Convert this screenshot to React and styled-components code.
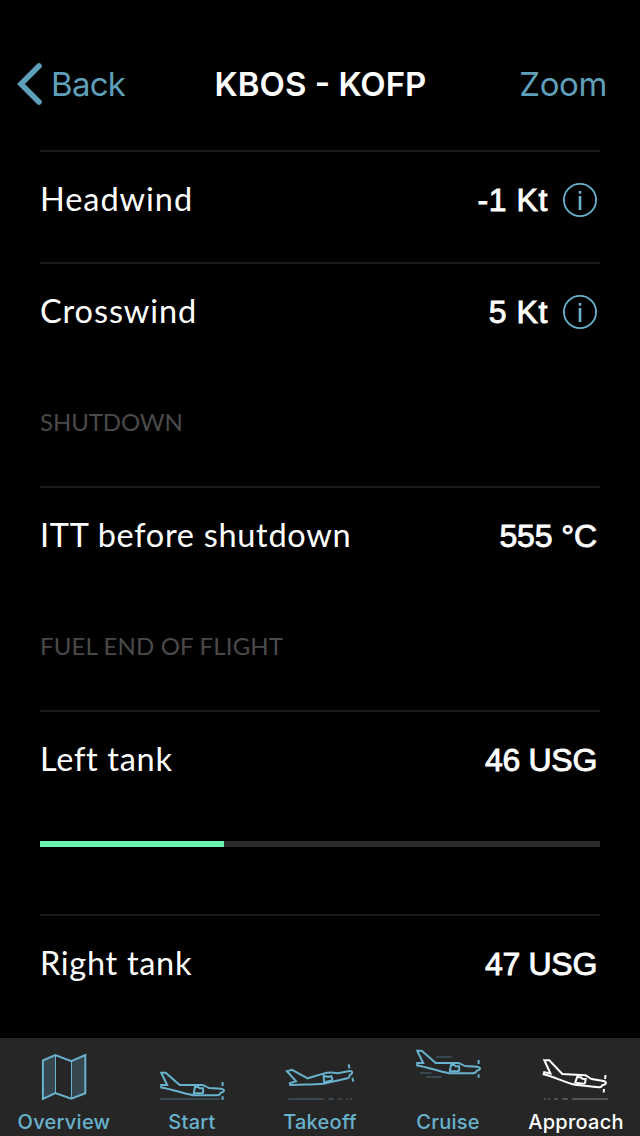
import React from 'react';
import styled, { createGlobalStyle } from 'styled-components';

const GlobalStyle = createGlobalStyle`
  * {
    box-sizing: border-box;
  }

  body {
    margin: 0;
    background: #000;
    color: #fff;
  }
`;

const Screen = styled.div`
  display: flex;
  flex-direction: column;
  width: 640px;
  height: 1136px;
  background: #000;
  overflow: hidden;
`;

const NavBar = styled.header`
  display: grid;
  grid-template-columns: 163px 1fr 147px;
  align-items: center;
  height: 150px;
  padding: 38px 33px 20px 17px;
  font-family: Inter, sans-serif;
  font-size: 33px;
  line-height: 40px;
  flex-shrink: 0;
`;

const NavButton = styled.button`
  display: flex;
  align-items: center;
  gap: 8px;
  justify-self: ${({ $end }) => ($end ? 'end' : 'start')};
  padding: 0;
  border: 0;
  background: none;
  color: #5f9fba;
  font: inherit;
  letter-spacing: ${({ $spacing }) => $spacing || 0}px;
  white-space: nowrap;
`;

const Title = styled.h1`
  margin: 0;
  padding-left: 1px;
  font-size: 33px;
  font-weight: 600;
  text-align: center;
  white-space: nowrap;
`;

const List = styled.main`
  flex: 1;
  padding: 0 40px;
  min-height: 0;
`;

const Row = styled.div`
  display: flex;
  flex-direction: column;
  height: ${({ $tall }) => ($tall ? 204 : 112)}px;
  border-top: 2px solid #1a1a1a;
`;

const RowLine = styled.div`
  display: flex;
  align-items: center;
  justify-content: space-between;
  height: 96px;
  padding: 0 3px 2px 0;
`;

const Label = styled.span`
  font-family: Lato, sans-serif;
  font-size: 32.5px;
  line-height: 40px;
  letter-spacing: ${({ $spacing }) => $spacing}px;
  white-space: nowrap;
`;

const Value = styled.span`
  display: flex;
  align-items: center;
  gap: 15px;
  padding-top: 1px;
  font-family: 'Liberation Sans', Arial, sans-serif;
  font-size: 32px;
  line-height: 40px;
  letter-spacing: ${({ $spacing }) => $spacing || 0}px;
  -webkit-text-stroke: 0.9px #fff;
  white-space: nowrap;
`;

const SectionTitle = styled.h2`
  height: 112px;
  margin: 0;
  padding-top: 33px;
  color: #4a4a4a;
  font-family: Lato, sans-serif;
  font-size: 24px;
  font-weight: 400;
  line-height: 30px;
  letter-spacing: ${({ $spacing }) => $spacing}px;
`;

const Track = styled.div`
  height: 6px;
  margin-top: 33px;
  background: #2a2a2a;
`;

const Fill = styled.div`
  height: 100%;
  background: #6bf2b0;
`;

const TabBar = styled.nav`
  display: grid;
  grid-template-columns: repeat(5, 1fr);
  height: 98px;
  background: #262626;
  flex-shrink: 0;
`;

const Tab = styled.div`
  display: flex;
  flex-direction: column;
  align-items: center;
  padding-top: 8px;
  color: ${({ $active }) => ($active ? '#fff' : '#68b2cd')};
  --shade: ${({ $active }) => ($active ? '#555' : '#36474f')};
`;

const TabLabel = styled.span`
  margin-top: 8px;
  font-family: Inter, sans-serif;
  font-size: 20px;
  font-weight: 500;
  line-height: 24px;
  letter-spacing: 0.25px;
  white-space: nowrap;
`;

const TabSvg = styled.svg`
  display: block;
  width: 80px;
  height: 56px;
  fill: none;
  stroke: currentColor;
  stroke-width: 2;
`;

const InfoSvg = styled.svg`
  width: 34px;
  height: 34px;
  fill: none;
  stroke: #68b2cd;
`;

const BackChevron = () => (
  <svg width="26" height="44" viewBox="0 0 26 44" fill="none">
    <path
      d="M22 4 L4 22 L22 40"
      stroke="#5f9fba"
      strokeWidth="5.6"
      strokeLinecap="round"
    />
  </svg>
);

const InfoIcon = () => (
  <InfoSvg viewBox="0 0 34 34">
    <circle cx="17" cy="17" r="16.1" strokeWidth="1.8" />
    <path d="M17 13V27M17 8V10.8" strokeWidth="2.6" />
  </InfoSvg>
);

const MapIcon = () => (
  <TabSvg viewBox="0 0 80 56">
    <path d="M18.7 14.5L31.3 9V47L18.7 53z" fill="var(--shade)" stroke="none" />
    <path d="M47.3 15L61.3 9V47L47.3 53z" fill="var(--shade)" stroke="none" />
    <path d="M18.9 14.5L31.3 9L47.3 15.2L61.3 9V47.2L47.3 52.8L31.3 47L18.9 53z" />
    <path d="M31.5 9V47M47.5 15V53" strokeWidth="1" />
  </TabSvg>
);

const LevelPlane = () => (
  <>
    <path d="M9.2 26.7H13.7L27.7 39H50.3C53 39.2 54.5 41.4 57.3 42L69 42.8Q72.2 43.3 72 45Q71.6 46.3 68.8 46.7L68 48Q67 49.2 64.7 49.2H41.3C29 47 20 43 9.2 41.4V39.1H15.2z" />
    <path d="M43.3 39.5L41.8 47.3H50Q51.3 47.2 51.2 46L51 42.2H47.5L46.3 41.1H43.2" />
    <path d="M70.6 36V40M70.6 50.3V53.8" />
  </>
);

const StartIcon = () => (
  <TabSvg viewBox="0 0 80 56">
    <path d="M8 53H68" stroke="var(--shade)" />
    <LevelPlane />
  </TabSvg>
);

const TakeoffIcon = () => (
  <TabSvg viewBox="0 0 80 56">
    <path
      d="M8.3 53H43.7M48.3 53H53.7M58.3 53H61.7M66 53H67.7M70 53H72"
      stroke="var(--shade)"
    />
    <path d="M7 25.2L12 23.9L27.7 32.3L45 27.1C50 26 52.5 26.3 57.7 27.3L69.5 25.1Q72.3 25 72.2 26.7Q72 28.3 69.8 29L69.2 30.9Q68.6 32 66.5 32.5L43.3 37.8C31 39 22 38.1 10.2 39L9.8 37.1L16 35.2z" />
    <path d="M43.6 28.2L44 36.2L51.5 34.6Q52.7 34.2 52.4 33L51.3 30.2L47.8 31L46.5 30.2L43.7 30.6" />
    <path d="M68.7 18.4L69.4 22.4M72.4 31.7L73.3 35.6" />
  </TabSvg>
);

const CruiseIcon = () => (
  <TabSvg viewBox="0 0 80 56">
    <path d="M28 11H43.7M12 27H23.7M18 31H33.7" stroke="var(--shade)" />
    <g transform="translate(0 -22)">
      <LevelPlane />
    </g>
  </TabSvg>
);

const ApproachIcon = () => (
  <TabSvg viewBox="0 0 80 56">
    <path
      d="M8 53H9.7M12.3 53H14M18.3 53H21.7M26.3 53H32M36.3 53H71.7"
      stroke="var(--shade)"
    />
    <path d="M8.3 14.2H13.3L26.3 27.9L49.2 29.2C52 30 53.2 32.4 55.7 33.1L67.5 35Q70.1 35.7 69.8 37.4Q69 38.8 66.5 38.9L65.6 40.4Q64.8 41.4 62.5 41.2L39 38.8C28 36 18 30.7 7.6 28.3L8.2 26.1L14.5 27.5z" />
    <path d="M41.8 29L39.2 36.7L47.5 37.8Q49 37.8 49.1 36.5L49.7 33L46.2 32.7L45.2 31.4L41.5 30.9" />
    <path d="M69.6 29L69 33M68 43L67.7 46.5" />
  </TabSvg>
);

const TABS = [
  { name: 'Overview', Icon: MapIcon },
  { name: 'Start', Icon: StartIcon },
  { name: 'Takeoff', Icon: TakeoffIcon },
  { name: 'Cruise', Icon: CruiseIcon },
  { name: 'Approach', Icon: ApproachIcon, active: true },
];

const DataRow = ({ label, value, spacing, valueSpacing, info, level }) => (
  <Row $tall={level !== undefined}>
    <RowLine>
      <Label $spacing={spacing}>{label}</Label>
      <Value $spacing={valueSpacing}>
        {value}
        {info && <InfoIcon />}
      </Value>
    </RowLine>
    {level !== undefined && (
      <Track>
        <Fill style={{ width: `${level}%` }} />
      </Track>
    )}
  </Row>
);

const App = () => (
  <>
    <GlobalStyle />
    <Screen>
      <NavBar>
        <NavButton $spacing={-0.7}>
          <BackChevron />
          Back
        </NavButton>
        <Title>KBOS - KOFP</Title>
        <NavButton $spacing={-0.4} $end>
          Zoom
        </NavButton>
      </NavBar>
      <List>
        <DataRow label="Headwind" value="-1 Kt" spacing={0.95} valueSpacing={0.6} info />
        <DataRow label="Crosswind" value="5 Kt" spacing={0.9} valueSpacing={0.6} info />
        <SectionTitle $spacing={-0.1}>SHUTDOWN</SectionTitle>
        <DataRow label="ITT before shutdown" value="555 °C" spacing={0.7} valueSpacing={-0.1} />
        <SectionTitle $spacing={0.15}>FUEL END OF FLIGHT</SectionTitle>
        <DataRow label="Left tank" value="46 USG" spacing={0.7} valueSpacing={-0.3} level={32.9} />
        <DataRow label="Right tank" value="47 USG" spacing={0.7} valueSpacing={-0.3} level={33.6} />
      </List>
      <TabBar>
        {TABS.map(({ name, Icon, active }) => (
          <Tab key={name} $active={active}>
            <Icon />
            <TabLabel>{name}</TabLabel>
          </Tab>
        ))}
      </TabBar>
    </Screen>
  </>
);

export default App;
